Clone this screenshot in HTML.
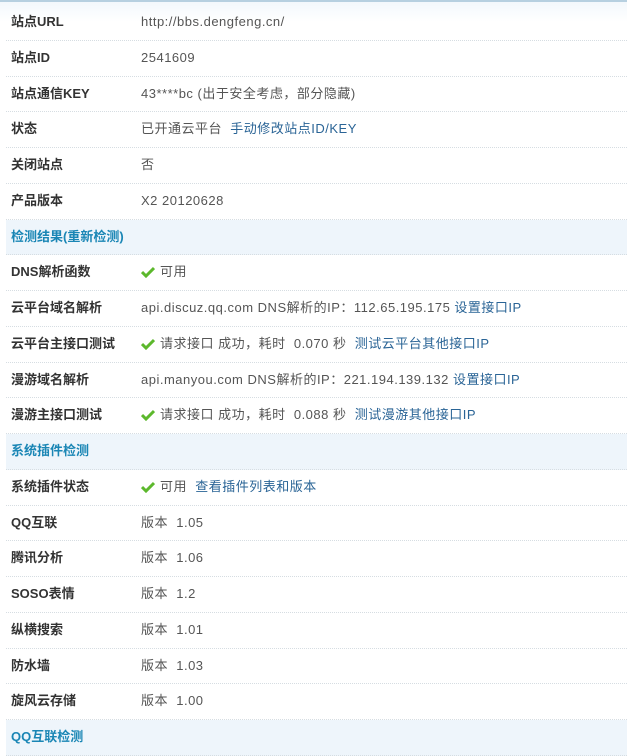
<!DOCTYPE html>
<html><head><meta charset="utf-8"><style>
body{margin:0;width:627px;height:735px;overflow:hidden;background:#fff;font-family:"Liberation Sans","Noto Sans CJK SC",sans-serif;font-size:13px;color:#555;}
.top{height:2px;background:#b7d0e0;margin-bottom:3px;}
.grad{position:absolute;left:0;top:2px;width:627px;height:20px;background:linear-gradient(#f3f8fc,#fff);z-index:-1}
.row{position:relative;height:34.75px;margin-left:6px;border-bottom:1px dotted #d6dde2;}
.l{position:absolute;left:5px;top:0;line-height:33px;font-weight:bold;color:#333;}
.v{position:absolute;left:135px;top:0;line-height:33px;color:#555;letter-spacing:0.5px;white-space:nowrap;}
.h{background:#eef5fb;}
.h .l{color:#1a86b5;}
a{color:#2a6496;text-decoration:none;}
.ck{display:inline-block;width:14px;height:12px;vertical-align:-2px;margin-right:5px;}
</style></head><body>
<div class="top"></div><div class="grad"></div>
<div class="row"><span class="l">站点URL</span><span class="v">http://bbs.dengfeng.cn/</span></div>
<div class="row"><span class="l">站点ID</span><span class="v">2541609</span></div>
<div class="row"><span class="l">站点通信KEY</span><span class="v">43****bc (出于安全考虑，部分隐藏)</span></div>
<div class="row"><span class="l">状态</span><span class="v">已开通云平台 &nbsp;<a>手动修改站点ID/KEY</a></span></div>
<div class="row"><span class="l">关闭站点</span><span class="v">否</span></div>
<div class="row"><span class="l">产品版本</span><span class="v">X2 20120628</span></div>
<div class="row h"><span class="l">检测结果(重新检测)</span></div>
<div class="row"><span class="l">DNS解析函数</span><span class="v"><svg class="ck" viewBox="0 0 14 12"><path d="M1 6 L5 10 L13 2" stroke="#5cb82c" stroke-width="3" fill="none"/></svg>可用</span></div>
<div class="row"><span class="l">云平台域名解析</span><span class="v">api.discuz.qq.com DNS解析的IP：112.65.195.175 <a>设置接口IP</a></span></div>
<div class="row"><span class="l">云平台主接口测试</span><span class="v"><svg class="ck" viewBox="0 0 14 12"><path d="M1 6 L5 10 L13 2" stroke="#5cb82c" stroke-width="3" fill="none"/></svg>请求接口 成功，耗时 &nbsp;0.070 秒 &nbsp;<a>测试云平台其他接口IP</a></span></div>
<div class="row"><span class="l">漫游域名解析</span><span class="v">api.manyou.com DNS解析的IP：221.194.139.132 <a>设置接口IP</a></span></div>
<div class="row"><span class="l">漫游主接口测试</span><span class="v"><svg class="ck" viewBox="0 0 14 12"><path d="M1 6 L5 10 L13 2" stroke="#5cb82c" stroke-width="3" fill="none"/></svg>请求接口 成功，耗时 &nbsp;0.088 秒 &nbsp;<a>测试漫游其他接口IP</a></span></div>
<div class="row h"><span class="l">系统插件检测</span></div>
<div class="row"><span class="l">系统插件状态</span><span class="v"><svg class="ck" viewBox="0 0 14 12"><path d="M1 6 L5 10 L13 2" stroke="#5cb82c" stroke-width="3" fill="none"/></svg>可用 &nbsp;<a>查看插件列表和版本</a></span></div>
<div class="row"><span class="l">QQ互联</span><span class="v">版本 &nbsp;1.05</span></div>
<div class="row"><span class="l">腾讯分析</span><span class="v">版本 &nbsp;1.06</span></div>
<div class="row"><span class="l">SOSO表情</span><span class="v">版本 &nbsp;1.2</span></div>
<div class="row"><span class="l">纵横搜索</span><span class="v">版本 &nbsp;1.01</span></div>
<div class="row"><span class="l">防水墙</span><span class="v">版本 &nbsp;1.03</span></div>
<div class="row"><span class="l">旋风云存储</span><span class="v">版本 &nbsp;1.00</span></div>
<div class="row h"><span class="l">QQ互联检测</span></div>
</body></html>
